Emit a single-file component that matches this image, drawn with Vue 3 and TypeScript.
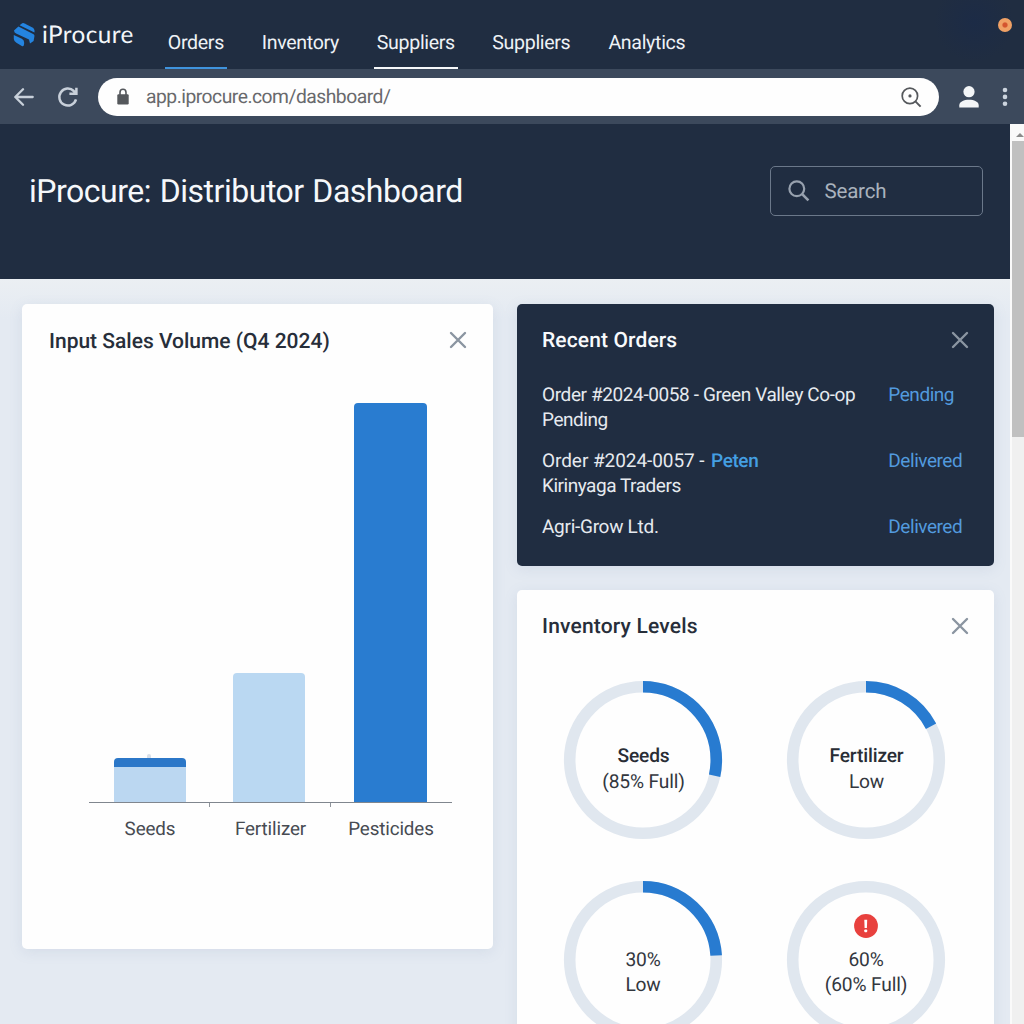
<script setup lang="ts">
interface NavItem {
  label: string
  state?: 'active' | 'current'
  width: number
}
interface Bar {
  label: string
  height: number
  tone: 'light' | 'dark'
  cap?: boolean
  width: number
}
interface OrderLine {
  text: string
  link?: string
  tracking: number
}
interface Order {
  lines: OrderLine[]
  status: string
}
interface Gauge {
  title: string
  note: string
  strong?: boolean
  alert?: boolean
  sweep: number
}

const nav: NavItem[] = [
  { label: 'Orders', state: 'active', width: 62 },
  { label: 'Inventory', width: 84 },
  { label: 'Suppliers', state: 'current', width: 84 },
  { label: 'Suppliers', width: 84 },
  { label: 'Analytics', width: 84 },
]

const bars: Bar[] = [
  { label: 'Seeds', height: 44, tone: 'light', cap: true, width: 72 },
  { label: 'Fertilizer', height: 129, tone: 'light', width: 72 },
  { label: 'Pesticides', height: 399, tone: 'dark', width: 73 },
]

const orders: Order[] = [
  {
    lines: [
      { text: 'Order #2024-0058 - Green Valley Co-op', tracking: -0.39 },
      { text: 'Pending', tracking: -0.45 },
    ],
    status: 'Pending',
  },
  {
    lines: [
      { text: 'Order #2024-0057 -', link: 'Peten', tracking: -0.06 },
      { text: 'Kirinyaga Traders', tracking: -0.47 },
    ],
    status: 'Delivered',
  },
  { lines: [{ text: 'Agri-Grow Ltd.', tracking: -0.28 }], status: 'Delivered' },
]

const gauges: Gauge[] = [
  { title: 'Seeds', note: '(85% Full)', strong: true, sweep: 102.4 },
  { title: 'Fertilizer', note: 'Low', strong: true, sweep: 62.5 },
  { title: '30%', note: 'Low', sweep: 86.4 },
  { title: '60%', note: '(60% Full)', alert: true, sweep: 0 },
]
</script>

<template>
  <div class="window">
    <header class="topnav">
      <div class="brand">
        <svg class="logo" width="24" height="26" viewBox="0 0 24 26">
          <path d="M8.2 1.9 Q9.8 .6 11.6 1.4 L19.4 5.4 Q21.4 6.5 21.5 8.4 L21.5 10.6 L6.6 3.2 Z" fill="#2484e0" />
          <path d="M1 8.4 L5.4 4.4 L20.6 12.2 Q21.8 13 21.4 14.6 L20.6 19 L17 21.4 L16 17.4 L3.6 11.8 Q1 10.6 1 8.4 Z" fill="#2484e0" />
          <path d="M.8 13 L8.8 16.8 Q11.4 18.2 11.2 21 L10.8 23.6 Q10 24.6 8.8 24 L3.4 20.8 Q1 19.4 .8 17 Z" fill="#2484e0" />
        </svg>
        <span class="brand-name">iProcure</span>
      </div>
      <nav class="links">
        <a
          v-for="(item, i) in nav"
          :key="i"
          class="link"
          :class="item.state"
          :style="{ width: item.width + 'px' }"
        ><span>{{ item.label }}</span></a>
      </nav>
      <span class="window-dot"></span>
    </header>

    <div class="browser">
      <svg class="back" width="20" height="18" viewBox="0 0 20 18" fill="none" stroke="#c8d0da" stroke-width="2.3" stroke-linecap="round" stroke-linejoin="round">
        <path d="M18.7 9 H1.4 M9 1.3 L1.3 9 L9 16.7" />
      </svg>
      <svg class="reload" width="22" height="22" viewBox="0 0 22 22" fill="none" stroke="#c8d0da" stroke-width="2.5">
        <path d="M19 13.4 A8.5 8.5 0 1 1 16.8 5 L18.6 7" />
        <path d="M19.4 1.8 V7.8 H12.4" />
        <path d="M19.4 3.6 V7.8 H15 Z" fill="#c8d0da" stroke="none" />
      </svg>
      <div class="address">
        <svg class="lock" width="12" height="17" viewBox="0 0 12 17">
          <rect x=".3" y="6.2" width="11.4" height="10.3" rx="1.2" fill="#55585c" />
          <path d="M3 7 V4.4 A3 3.2 0 0 1 9 4.4 V7" fill="none" stroke="#55585c" stroke-width="1.6" />
        </svg>
        <span class="url">app.iprocure.com/dashboard/</span>
        <svg class="zoom" width="21" height="21" viewBox="0 0 21 21" fill="none" stroke="#55585c" stroke-width="1.7">
          <circle cx="8.9" cy="8.9" r="7.7" />
          <path d="M14.4 14.4 L19.6 19.6" stroke-width="2" />
          <circle cx="9" cy="8.9" r="1.6" fill="#55585c" stroke="none" />
        </svg>
      </div>
      <svg class="user" width="20" height="22" viewBox="0 0 20 22" fill="#f3f5f7">
        <circle cx="10" cy="5.7" r="5.6" />
        <path d="M.3 21.6 V19.2 C.3 15.6 5 13.7 10 13.7 S19.7 15.6 19.7 19.2 V21.6 Z" />
      </svg>
      <svg class="menu" width="6" height="20" viewBox="0 0 6 20" fill="#ccd4de">
        <circle cx="3" cy="3" r="2.3" />
        <circle cx="3" cy="9.9" r="2.3" />
        <circle cx="3" cy="16.8" r="2.3" />
      </svg>
    </div>

    <div class="viewport">
      <main class="page">
        <section class="hero">
          <h1>iProcure: Distributor Dashboard</h1>
          <div class="search">
            <svg width="22" height="22" viewBox="0 0 22 22" fill="none" stroke="#97a1ae" stroke-width="2.2">
              <circle cx="8.8" cy="8.8" r="7.4" />
              <path d="M14.2 14.2 L20.4 20.4" stroke-width="2.6" />
            </svg>
            <span>Search</span>
          </div>
        </section>

        <section class="board">
          <article class="card sales">
            <div class="card-head">
              <h2>Input Sales Volume (Q4 2024)</h2>
              <svg class="close" width="18" height="18" viewBox="0 0 18 18"><path d="M2 2 L16 16 M16 2 L2 16" /></svg>
            </div>
            <div class="plot">
              <div v-for="bar in bars" :key="bar.label" class="slot">
                <span v-if="bar.cap" class="nub"></span>
                <div class="bar" :class="[bar.tone, { cap: bar.cap }]" :style="{ height: bar.height + 'px', width: bar.width + 'px' }"></div>
              </div>
            </div>
            <div class="axis">
              <div v-for="bar in bars" :key="bar.label" class="tick-label"><span>{{ bar.label }}</span></div>
            </div>
          </article>

          <div class="side">
            <article class="card orders">
              <div class="card-head">
                <h2>Recent Orders</h2>
                <svg class="close" width="18" height="18" viewBox="0 0 18 18"><path d="M2 2 L16 16 M16 2 L2 16" /></svg>
              </div>
              <ul>
                <li v-for="(order, i) in orders" :key="i">
                  <div class="desc">
                    <div v-for="line in order.lines" :key="line.text">
                      <span :style="{ letterSpacing: line.tracking + 'px' }">{{ line.text }}</span><b v-if="line.link">{{ line.link }}</b>
                    </div>
                  </div>
                  <span class="status">{{ order.status }}</span>
                </li>
              </ul>
            </article>

            <article class="card inventory">
              <div class="card-head">
                <h2>Inventory Levels</h2>
                <svg class="close" width="18" height="18" viewBox="0 0 18 18"><path d="M2 2 L16 16 M16 2 L2 16" /></svg>
              </div>
              <div class="gauges">
                <div v-for="g in gauges" :key="g.title" class="gauge">
                  <svg class="ring" width="160" height="160" viewBox="-80 -80 160 160" fill="none" stroke-width="11.6">
                    <circle r="73.3" stroke="#e0e7ef" />
                    <circle v-if="g.sweep" r="73.3" stroke="#287bd0" pathLength="360" :stroke-dasharray="g.sweep + ' 360'" transform="rotate(-90)" />
                  </svg>
                  <div class="reading" :class="{ named: g.strong }">
                    <svg v-if="g.alert" class="alert" width="24" height="24" viewBox="0 0 24 24">
                      <circle cx="12" cy="12" r="11.9" fill="#e8413e" />
                      <path d="M10.3 5.8 H13.2 L12.9 14 H10.6 Z" fill="#fff" />
                      <rect x="10.3" y="15.5" width="2.9" height="2.8" rx=".8" fill="#fff" />
                    </svg>
                    <strong v-if="g.strong">{{ g.title }}</strong>
                    <span v-else>{{ g.title }}</span>
                    <span class="note">{{ g.note }}</span>
                  </div>
                </div>
              </div>
            </article>
          </div>
        </section>
      </main>
      <aside class="scrollbar">
        <div class="arrow"></div>
        <div class="thumb"></div>
      </aside>
    </div>
  </div>
</template>

<style>
body {
  margin: 0;
  overflow: hidden;
}
</style>

<style scoped>
.window {
  width: 1024px;
  height: 1024px;
  overflow: hidden;
  display: flex;
  flex-direction: column;
  font-family: Roboto, 'Liberation Sans', sans-serif;
  text-rendering: geometricPrecision;
  background: #202d41;
}
.topnav {
  flex: none;
  height: 69px;
  display: flex;
  position: relative;
  z-index: 1;
  background: radial-gradient(circle 40px at 974px 22px, #1c2b46, rgba(28, 43, 70, 0)), #202d41;
}
.brand {
  display: flex;
  width: 150px;
  height: 69px;
  padding-left: 13px;
  box-sizing: border-box;
}
.logo {
  margin-top: 22px;
}
.brand-name {
  margin-left: 5px;
  margin-top: 19px;
  font: 400 24.3px/32px Lato, sans-serif;
  letter-spacing: 0.4px;
  color: #f4f7fa;
  white-space: nowrap;
}
.links {
  display: flex;
  gap: 31.5px;
  margin-left: 14.5px;
}
.link {
  display: flex;
  justify-content: center;
  height: 67px;
  font-size: 19.6px;
  letter-spacing: -0.33px;
  line-height: 24px;
  color: #eef2f6;
  border-bottom: 2px solid transparent;
}
.link span {
  margin: 31px 0 0 0.7px;
  white-space: nowrap;
}
.link.active {
  border-color: #3f93dd;
}
.link.current {
  border-color: #f6f8fa;
}
.window-dot {
  width: 14px;
  height: 14px;
  margin: 18px 12px 0 auto;
  border-radius: 50%;
  background: radial-gradient(circle, #d4542f 0 2px, #f0a165 3.2px);
}
.browser {
  flex: none;
  height: 55px;
  display: flex;
  align-items: center;
  background: #3c495c;
}
.back {
  margin-left: 14px;
}
.reload {
  margin-left: 23px;
}
.address {
  display: flex;
  align-items: center;
  width: 841px;
  height: 38px;
  margin: 0 0 0 19px;
  box-sizing: border-box;
  padding: 0 17px 0 19px;
  border-radius: 19px;
  background: #fefefe;
}
.url {
  margin-left: 17px;
  font-size: 19.3px;
  letter-spacing: -0.5px;
  color: #68696c;
}
.zoom {
  margin: 1px 0 0 auto;
}
.user {
  margin-left: 20px;
}
.menu {
  margin-left: 23px;
}
.viewport {
  flex: 1;
  min-height: 0;
  display: flex;
}
.page {
  width: 1010px;
  flex: none;
  display: flex;
  flex-direction: column;
  background: #e6ecf2;
}
.hero {
  flex: none;
  height: 155px;
  box-sizing: border-box;
  display: flex;
  justify-content: space-between;
  padding: 41.5px 27px 0 29px;
  background: #202d41;
}
.hero h1 {
  margin: 5px 0 0;
  font-size: 32px;
  line-height: 40px;
  font-weight: 400;
  letter-spacing: -0.48px;
  word-spacing: 1.2px;
  color: #f6f8fb;
}
.search {
  display: flex;
  align-items: center;
  gap: 14.5px;
  width: 213px;
  height: 50px;
  box-sizing: border-box;
  padding-left: 17px;
  border: 1px solid #6b788a;
  border-radius: 5px;
  font-size: 20.5px;
  letter-spacing: -0.2px;
  color: #a9b2bd;
}
.search span {
  margin-top: 2px;
}
.board {
  flex: 1;
  min-height: 0;
  display: flex;
  align-items: flex-start;
  gap: 24px;
  padding: 25px 16px 0 22px;
  background: linear-gradient(#ebeff3, #e4eaf2 40px, #e4eaf2);
}
.card {
  box-sizing: border-box;
  border-radius: 5px;
  background: #fefefe;
  box-shadow: 0 3px 14px rgba(110, 135, 170, 0.13);
}
.card-head {
  display: flex;
  align-items: center;
  justify-content: space-between;
  height: 24px;
}
.card-head h2 {
  margin: 1px 0 0;
  font-size: 21px;
  line-height: 24px;
  font-weight: 500;
  color: #272e3a;
}
.close path {
  fill: none;
  stroke: #8b95a1;
  stroke-width: 2.4;
  stroke-linecap: round;
}
.sales {
  width: 471px;
  height: 645px;
  padding: 24px 26px 0 27px;
}
.sales h2 {
  margin-top: 3px;
}
.plot {
  display: flex;
  width: 363px;
  height: 450px;
  margin-left: 40px;
  border-bottom: 1px solid #80868e;
}
.slot {
  flex: none;
  width: 122px;
  display: flex;
  flex-direction: column;
  align-items: center;
  justify-content: flex-end;
}
.slot:nth-child(2) {
  width: 116px;
}
.slot:last-child {
  width: 126px;
}
.nub {
  width: 4px;
  height: 4px;
  margin-right: 2px;
  border-radius: 50% 50% 0 0;
  background: #d8dfe8;
}
.bar {
  border-radius: 4px 4px 0 0;
}
.bar.light {
  background: #bad8f2;
}
.bar.dark {
  background: #297cd0;
}
.bar.cap {
  background: linear-gradient(#2b77c8 9px, #bbd7f1 9px);
}
.axis {
  display: flex;
  width: 363px;
  margin-left: 40px;
}
.tick-label {
  flex: 1;
  display: flex;
  justify-content: center;
  font-size: 18.8px;
  letter-spacing: -0.12px;
  line-height: 24px;
  color: #474b52;
}
.tick-label span {
  margin: 14px auto 0;
}
.tick-label:first-child span {
  padding-left: 1px;
}
.tick-label:last-child span {
  padding-right: 1px;
}
.tick-label:not(:last-child)::after {
  content: '';
  flex: none;
  width: 1px;
  height: 4px;
  margin-left: -1px;
  background: #8f949b;
}
.side {
  width: 477px;
  flex: none;
  display: flex;
  flex-direction: column;
  gap: 23.5px;
}
.orders {
  height: 262px;
  padding: 24px 25px 0 25px;
  background: #202d41;
}
.orders h2 {
  color: #f8fafc;
  letter-spacing: 0.13px;
}
.orders ul {
  list-style: none;
  margin: 31px 0 0;
  padding: 0;
}
.orders li {
  display: flex;
  justify-content: space-between;
  margin-bottom: 16.5px;
  font-size: 19px;
  line-height: 24.7px;
  color: #e6eaef;
  white-space: nowrap;
}
.orders b {
  margin-left: 6.5px;
  font-weight: 500;
  letter-spacing: -0.4px;
  color: #449fe2;
}
.status {
  width: 80.7px;
  letter-spacing: -0.45px;
  color: #529ade;
}
.inventory {
  height: 520px;
  padding: 24.5px 25px 0 25px;
}
.inventory h2 {
  letter-spacing: 0.18px;
}
.gauges {
  display: grid;
  grid-template-columns: 160px 160px;
  column-gap: 63px;
  row-gap: 40.5px;
  margin: 41.5px 0 0 21px;
}
.gauge {
  display: grid;
  height: 160px;
}
.ring,
.reading {
  grid-area: 1 / 1;
}
.reading {
  display: flex;
  flex-direction: column;
  align-items: center;
  justify-content: flex-end;
  height: 117.5px;
  font-size: 19.2px;
  letter-spacing: -0.15px;
  line-height: 25.5px;
  color: #33373e;
}
.reading.named {
  height: 114.5px;
  padding-left: 1px;
}
.reading strong {
  font-weight: 500;
  color: #292d35;
}
.alert {
  margin-bottom: 9px;
}
.scrollbar {
  width: 14px;
  box-sizing: border-box;
  border-left: 2px solid #fafafa;
  background: #f0f0f0;
}
.arrow {
  height: 17px;
  display: flex;
  align-items: center;
  justify-content: center;
  background: #fafafa;
}
.arrow::after {
  content: '';
  margin: 5px 0 0 3px;
  border: 4px solid transparent;
  border-top: 0;
  border-bottom: 4px solid #8b8b8b;
}
.thumb {
  height: 296px;
  background: #c0c0c0;
}
</style>
